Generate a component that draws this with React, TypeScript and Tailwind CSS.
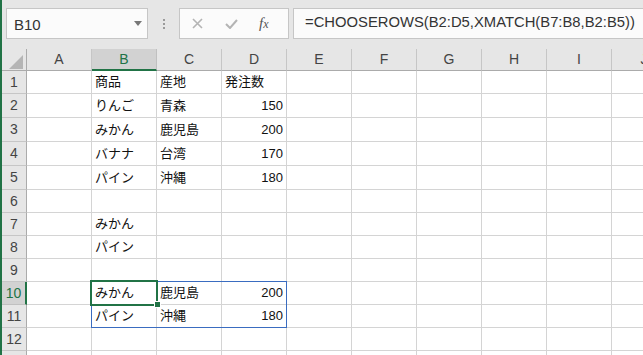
import React from 'react';

const COLS = ['A', 'B', 'C', 'D', 'E', 'F', 'G', 'H', 'I', 'J'];
const ROW_HEIGHTS = ['h-[23px]', 'h-[24px]', 'h-[24px]', 'h-[24px]', 'h-[24px]', 'h-[23px]', 'h-[23px]', 'h-[23px]', 'h-[23px]', 'h-[23px]', 'h-[23px]', 'h-[23px]', 'h-[23px]'];

// row -> { col: value }
const DATA: Record<number, Record<string, string>> = {
  1: { B: '商品', C: '産地', D: '発注数' },
  2: { B: 'りんご', C: '青森', D: '150' },
  3: { B: 'みかん', C: '鹿児島', D: '200' },
  4: { B: 'バナナ', C: '台湾', D: '170' },
  5: { B: 'パイン', C: '沖縄', D: '180' },
  7: { B: 'みかん' },
  8: { B: 'パイン' },
  10: { B: 'みかん', C: '鹿児島', D: '200' },
  11: { B: 'パイン', C: '沖縄', D: '180' },
};

const isNumber = (v: string) => /^\d+$/.test(v);

function FormulaBar() {
  return (
    <div className="h-[49px] bg-[#e6e6e6] flex items-start pt-[8px] pl-[4px]">
      {/* Name box */}
      <div className="w-[142px] h-[31px] bg-[#fbfbfb] border border-[#c6c6c6] flex items-center justify-between pl-[7px] pr-[5px]">
        <span className="text-[15px] text-[#333] mt-[4px]">B10</span>
        <svg width="8" height="5" viewBox="0 0 8 5" className="mb-[1px]">
          <path d="M0 0 L8 0 L4 5 Z" fill="#777" />
        </svg>
      </div>
      {/* separator dots */}
      <div className="w-[31px] h-[31px] flex flex-col items-center justify-center gap-[2px]">
        <div className="w-[2px] h-[2px] bg-[#9a9a9a]" />
        <div className="w-[2px] h-[2px] bg-[#9a9a9a]" />
        <div className="w-[2px] h-[2px] bg-[#9a9a9a]" />
      </div>
      {/* cancel / enter / fx */}
      <div className="w-[110px] h-[31px] bg-[#fbfbfb] border border-[#c6c6c6] flex items-center">
        <svg width="11" height="11" viewBox="0 0 11 11" className="ml-[12px]">
          <path d="M1 1 L10 10 M10 1 L1 10" stroke="#b4b4b4" strokeWidth="1.6" />
        </svg>
        <svg width="13" height="10" viewBox="0 0 13 10" className="ml-[22px]">
          <path d="M1 5 L5 9 L12 1" stroke="#b4b4b4" strokeWidth="2" fill="none" />
        </svg>
        <span className="ml-[21px] text-[15px] italic text-[#555] font-['Liberation_Serif',serif] leading-none">
          f<span className="text-[12px]">x</span>
        </span>
      </div>
      {/* formula */}
      <div className="ml-[4px] flex-1 h-[31px] bg-[#fbfbfb] border border-r-0 border-[#c6c6c6] flex items-center pl-[11px] whitespace-nowrap">
        <span className="text-[14.8px] text-[#333] -mt-[3px]">=CHOOSEROWS(B2:D5,XMATCH(B7:B8,B2:B5))</span>
      </div>
    </div>
  );
}

function Grid() {
  return (
    <div className="relative">
      {/* column header */}
      <div className="flex h-[22px]">
        <div className="w-[25px] shrink-0 bg-[#e6e6e6] border-r border-b border-[#ababab] relative">
          <svg width="14" height="14" viewBox="0 0 14 14" className="absolute right-[3px] bottom-[1px]">
            <path d="M14 0 L14 14 L0 14 Z" fill="#b5b5b5" />
          </svg>
        </div>
        {COLS.map((c) => (
          <div
            key={c}
            className={
              c === 'B'
                ? 'w-[65px] shrink-0 bg-[#d2d2d2] border-r border-[#c0c0c0] border-b-2 border-b-[#217346] flex items-center justify-center text-[14px] text-[#217346]'
                : 'w-[65px] shrink-0 bg-[#e6e6e6] border-r border-b border-r-[#c6c6c6] border-b-[#ababab] flex items-center justify-center text-[14px] text-[#444]'
            }
          >
            {c}
          </div>
        ))}
      </div>
      {/* rows */}
      {ROW_HEIGHTS.map((h, i) => {
        const r = i + 1;
        const row = DATA[r] || {};
        return (
          <div key={r} className={`flex ${h}`}>
            <div
              className={
                r === 10
                  ? 'w-[25px] shrink-0 bg-[#d2d2d2] border-r-2 border-r-[#217346] border-b border-b-[#c0c0c0] flex items-center justify-center text-[14px] text-[#217346]'
                  : 'w-[25px] shrink-0 bg-[#e6e6e6] border-r border-b border-r-[#ababab] border-b-[#c6c6c6] flex items-center justify-center text-[14px] text-[#444]'
              }
            >
              {r}
            </div>
            {COLS.map((c) => {
              const v = row[c];
              return (
                <div
                  key={c}
                  className={`w-[65px] shrink-0 border-r border-b border-[#d4d4d4] flex items-center px-[3px] text-[13px] text-[#111] whitespace-nowrap ${
                    v && isNumber(v) ? 'justify-end' : 'justify-start'
                  }`}
                >
                  {v}
                </div>
              );
            })}
          </div>
        );
      })}
      {/* selected range B10:D11 */}
      <div className="absolute left-[89px] top-[232px] w-[196px] h-[47px] border border-[#3a6cc0] pointer-events-none" />
      {/* active cell B10 */}
      <div className="absolute left-[88px] top-[231px] w-[68px] h-[26px] border-2 border-[#217346] pointer-events-none" />
      <div className="absolute left-[152px] top-[252px] w-[7px] h-[7px] bg-[#217346] border border-white" />
    </div>
  );
}

export default function App() {
  return (
    <div className="w-[643px] h-[355px] overflow-hidden bg-white border-l-2 border-[#217346] font-['Liberation_Sans','Noto_Sans_CJK_JP',sans-serif]">
      <FormulaBar />
      <Grid />
    </div>
  );
}
